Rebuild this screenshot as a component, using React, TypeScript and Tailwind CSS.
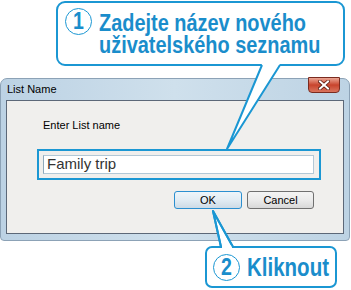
import React from "react";

const BLUE = "#1b97d3";

function CircleNum({ n }: { n: string }) {
  return (
    <span className="flex h-[27px] w-[27px] shrink-0 items-center justify-center rounded-full border-[1.5px] border-[#1b97d3] text-[23px] leading-none font-bold">
      <span className="scale-x-[0.85]">{n}</span>
    </span>
  );
}

function CloseButton() {
  return (
    <div className="flex h-[16px] w-[32px] items-center justify-center rounded-b-[4px] border border-[#7a2b1f] bg-gradient-to-b from-[#eaa594] via-[#c8432c] to-[#d9735c]">
      <svg width="12" height="10" viewBox="0 0 12 10">
        <path
          d="M2 1.5 L10 8.5 M10 1.5 L2 8.5"
          stroke="#5a1c12"
          strokeWidth="3.6"
          strokeLinecap="square"
        />
        <path
          d="M2 1.5 L10 8.5 M10 1.5 L2 8.5"
          stroke="#ffffff"
          strokeWidth="2"
          strokeLinecap="square"
        />
      </svg>
    </div>
  );
}

function Dialog() {
  return (
    <div className="mt-[78px] flex h-[163px] w-[350px] flex-col rounded-t-[7px] rounded-b-[4px] border border-[#8ca2b6] bg-gradient-to-r from-[#bcd2e4] via-[#cfe0ec] to-[#bdd3e4]">
      <div className="flex h-[21px] items-start justify-between pl-[6px] pr-[9px]">
        <span className="pt-[3px] text-[11px] leading-[14px] text-black">
          List Name
        </span>
        <div className="-mt-[2px]">
          <CloseButton />
        </div>
      </div>
      <div className="mx-[5px] flex h-[134px] flex-col border border-[#5c6878] bg-[#f0efed]">
        <div className="mt-[18px] pl-[36px] text-[11px] leading-[13px] text-black">
          Enter List name
        </div>
        <div className="ml-[30px] mt-[17px] h-[31px] w-[284px] border-2 border-[#1b97d3] p-[4px]">
          <div className="flex h-[19px] w-[271px] items-center border border-[#b3c8d6] border-l-[#8fa9bb] bg-white pl-[3px] text-[15px] text-[#333]">
            Family trip
          </div>
        </div>
        <div className="mt-[11px] flex gap-[5px] pl-[167px]">
          <div className="flex h-[18px] w-[68px] items-center justify-center rounded-[3px] border-[1.5px] border-[#2b8fd0] bg-gradient-to-b from-[#eef5fa] via-[#e2ecf3] to-[#cddbe6] text-[11px] text-black">
            OK
          </div>
          <div className="flex h-[18px] w-[67px] items-center justify-center rounded-[3px] border border-[#707070] bg-gradient-to-b from-[#f4f4f4] via-[#ebebeb] to-[#d8d8d8] text-[11px] text-black">
            Cancel
          </div>
        </div>
      </div>
    </div>
  );
}

export default function App() {
  return (
    <div className="relative h-[290px] w-[351px] overflow-hidden bg-white font-['Liberation_Sans',Arial,sans-serif]">
      <Dialog />

      {/* callout 1 */}
      <div className="absolute left-[56px] top-[1px] flex h-[65px] w-[289px] items-start gap-[7px] rounded-[9px] border-2 border-[#1b97d3] bg-white pl-[7px] text-[#1a8dcb]">
        <div className="mt-[5px]">
          <CircleNum n="1" />
        </div>
        <div className="mt-[9px] origin-left scale-x-[0.83] whitespace-nowrap text-[24px] leading-[22px] font-bold">
          <div>Zadejte název nového</div>
          <div>uživatelského seznamu</div>
        </div>
      </div>
      <svg
        className="absolute left-0 top-0"
        width="351"
        height="290"
        viewBox="0 0 351 290"
      >
        <polygon points="262,64 280,64 227,149" fill="#fff" />
        <path
          d="M262,65 L227,149 L280,65"
          fill="none"
          stroke={BLUE}
          strokeWidth="2"
          strokeLinejoin="round"
        />
        <polygon points="221,248 233,248 213,211" fill="#fff" />
        <path
          d="M221,247 L213,211 L233,247"
          fill="none"
          stroke={BLUE}
          strokeWidth="2"
          strokeLinejoin="round"
        />
      </svg>

      {/* callout 2 */}
      <div className="absolute left-[205px] top-[246px] flex h-[42px] w-[132px] items-center gap-[7px] rounded-[7px] border-2 border-[#1b97d3] bg-white pl-[6px] text-[#1a8dcb]">
        <CircleNum n="2" />
        <span className="origin-left scale-x-[0.82] whitespace-nowrap text-[25px] leading-none font-bold">
          Kliknout
        </span>
      </div>
      <svg
        className="absolute left-0 top-0"
        width="351"
        height="290"
        viewBox="0 0 351 290"
      >
        <rect x="222" y="245" width="10" height="4" fill="#fff" />
        <path
          d="M221,247 L213,211 L233,247"
          fill="none"
          stroke={BLUE}
          strokeWidth="2"
          strokeLinejoin="round"
        />
      </svg>
    </div>
  );
}
